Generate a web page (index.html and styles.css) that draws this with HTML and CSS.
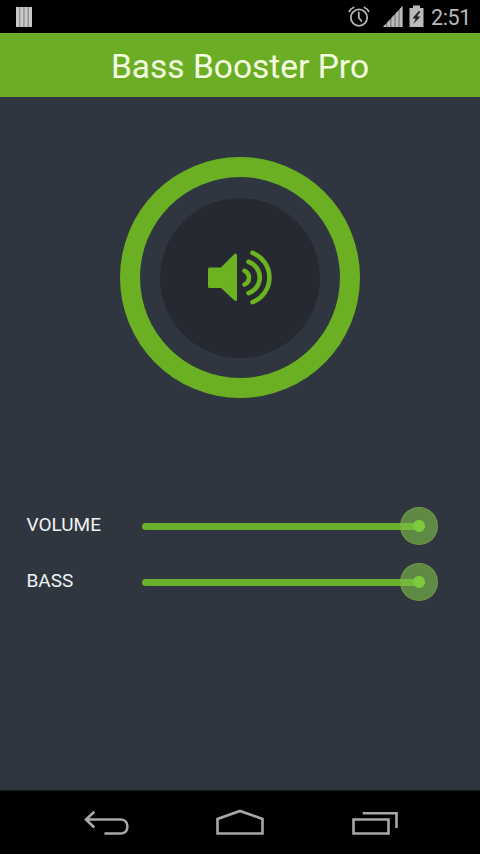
FILE: index.html
```html
<!DOCTYPE html>
<html lang="en">
<head>
<meta charset="utf-8">
<title>Bass Booster Pro</title>
<link rel="stylesheet" href="styles.css">
</head>
<body>
<div class="status">
  <svg class="bars" width="16" height="20" viewBox="0 0 16 20"><path fill="#8f8f8f" d="M0 0h16v20H0z"/><path stroke="#c9c9c9" stroke-width="3" d="M1.5 0v20M5.8 0v20M10.1 0v20M14.5 0v20"/></svg>
  <div class="status-right">
    <svg class="alarm" width="22" height="22" viewBox="0 0 22 22" fill="none" stroke="#b5b5b5" stroke-width="1.8" stroke-linecap="round"><circle cx="11" cy="12.6" r="8.2"/><path d="M10.8 7.5v5.3l2.6 3.2M1.300 6.300Q2.600 3.500 5.600 2.500M20.700 6.300Q19.400 3.500 16.400 2.500"/></svg>
    <svg class="signal" width="20" height="22" viewBox="0 0 20 22"><path fill="#777" d="M0 22 19.500 1v21z"/><path fill="#bababa" d="M0 22l3-3.200V22zM4.300 17.400 7.200 14.200V22H4.300zM8.500 12.800l2.900-3.100V22H8.500zM12.600 8.400l2.900-3.100V22h-2.900zM16.700 4l2.800-3v21h-2.800z"/></svg>
    <svg class="battery" width="15" height="22" viewBox="0 0 15 22"><path fill="#bababa" d="M4 .5h7v2.500h3.500V22H.5V3H4z"/><path fill="#222" d="M9.800 6 3.500 13.200l3.200.5-2.500 5.300 7.200-7.200-3.400-.5 3.500-4.600z"/></svg>
    <span class="time">2:51</span>
  </div>
</div>
<header class="header"><h1>Bass Booster Pro</h1></header>
<main class="content">
  <div class="ring"><div class="disc">
    <svg width="66" height="58" viewBox="0 0 66 58" fill="none" stroke="#6cb322" stroke-width="4.600" stroke-linecap="round">
      <path fill="#6cb322" stroke-width="3" stroke-linejoin="round" d="M2.500 20H14.500L28.500 6V50.500L14.500 37.500H2.500z"/>
      <path d="M37.500 21.800A7.500 7.500 0 0 1 37.500 35.500M41.500 12.800A16.500 16.500 0 0 1 41.500 44.100M45.500 3.800A26.500 26.500 0 0 1 45.500 53.200"/>
    </svg>
  </div></div>
  <div class="controls">
    <div class="row"><span class="label">VOLUME</span><div class="slider"><div class="track"></div><div class="thumb"></div></div></div>
    <div class="row"><span class="label">BASS</span><div class="slider"><div class="track"></div><div class="thumb"></div></div></div>
  </div>
</main>
<nav class="nav">
  <svg width="46" height="28" viewBox="0 0 46 28" fill="none" stroke="#a8a8a8" stroke-width="2.600"><path d="M2 10.500H37C45.500 10.500 45.500 24.500 37 24.500H20.500M10.300 2.800 2 10.500 10.300 18.500"/></svg>
  <svg width="50" height="28" viewBox="0 0 50 28" fill="none" stroke="#a8a8a8" stroke-width="2.600"><path d="M1.500 24.500V10L24 2 46.500 10V24.500z"/></svg>
  <svg width="46" height="28" viewBox="0 0 46 28" fill="none" stroke="#a8a8a8" stroke-width="2.600"><path d="M1.500 10.500H36.500V24.500H1.500zM10.700 4.200H44.500V19"/></svg>
</nav>
</body>
</html>
```
FILE: styles.css
```css
* { box-sizing: border-box; }
body {
  margin: 0;
  width: 480px;
  height: 854px;
  display: flex;
  flex-direction: column;
  background: #30363f;
  color: #f0f3f6;
  font-family: Roboto, "Liberation Sans", sans-serif;
  overflow: hidden;
}
svg { display: block; flex: none; }
.status {
  height: 33px;
  flex: none;
  padding: 5px 9px 0 16px;
  background: #000;
  display: flex;
  justify-content: space-between;
}
.bars { margin-top: 2px; }
.status-right { display: flex; }
.signal { margin-left: 13px; }
.battery { margin-left: 6px; }
.time {
  width: 40px;
  margin-left: 7px;
  font-size: 21.5px;
  letter-spacing: -0.4px;
  line-height: 25px;
  color: #bababa;
  white-space: nowrap;
}
.header {
  height: 64px;
  flex: none;
  background: #6bae25;
  display: flex;
  justify-content: center;
}
h1 {
  margin: 0;
  font-size: 33.5px;
  font-weight: 400;
  line-height: 67px;
  color: #f4ffe2;
  white-space: nowrap;
}
.content {
  flex: 1;
  padding-top: 60px;
  display: flex;
  flex-direction: column;
  align-items: center;
}
.ring {
  width: 240px;
  height: 241px;
  flex: none;
  border: 20px solid #6bb023;
  border-radius: 50%;
  display: flex;
  align-items: center;
  justify-content: center;
}
.disc {
  width: 160px;
  height: 160px;
  border-radius: 50%;
  background: #262932;
  display: flex;
  align-items: center;
  justify-content: center;
}
.controls {
  width: 100%;
  margin-top: 100px;
  padding: 0 41px 0 26.5px;
}
.row {
  height: 56px;
  display: flex;
  align-items: center;
}
.label {
  width: 115px;
  font-size: 19px;
  line-height: 22px;
  margin-top: -2px;
}
.slider {
  flex: 1;
  display: flex;
  align-items: center;
}
.track {
  width: 281px;
  height: 7px;
  flex: none;
  border-radius: 4px;
  background: #6bb02b;
}
.thumb {
  width: 38px;
  height: 38px;
  flex: none;
  margin-left: -23px;
  border-radius: 50%;
  border: 1px solid rgba(125, 178, 75, .45);
  background: radial-gradient(circle, #7ccb3c 0 5.5px, rgba(124, 190, 72, .62) 6.5px);
}
.nav {
  height: 64px;
  flex: none;
  padding: 0 82px 0 84px;
  background: #000;
  border-top: 1px solid #15181c;
  display: flex;
  align-items: center;
  justify-content: space-between;
}
```
